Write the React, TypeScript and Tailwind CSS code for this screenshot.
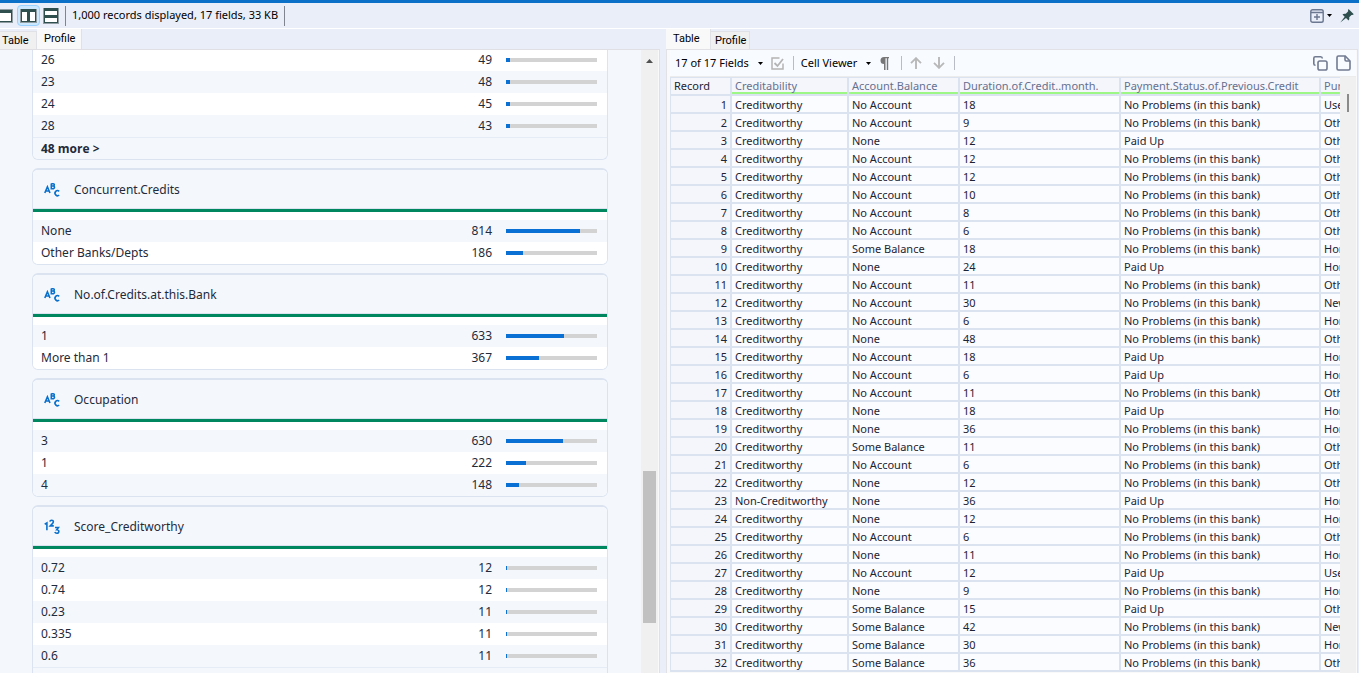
import React, { useState } from "react";

type Entry = { label: string; count: number };
type Field = { name: string; kind: "text" | "number"; entries: Entry[]; hasFooter?: boolean };

const TOTAL = 1000;

const leadEntries: Entry[] = [
  { label: "26", count: 49 },
  { label: "23", count: 48 },
  { label: "24", count: 45 },
  { label: "28", count: 43 },
];

const fields: Field[] = [
  {
    name: "Concurrent.Credits",
    kind: "text",
    entries: [
      { label: "None", count: 814 },
      { label: "Other Banks/Depts", count: 186 },
    ],
  },
  {
    name: "No.of.Credits.at.this.Bank",
    kind: "text",
    entries: [
      { label: "1", count: 633 },
      { label: "More than 1", count: 367 },
    ],
  },
  {
    name: "Occupation",
    kind: "text",
    entries: [
      { label: "3", count: 630 },
      { label: "1", count: 222 },
      { label: "4", count: 148 },
    ],
  },
  {
    name: "Score_Creditworthy",
    kind: "number",
    entries: [
      { label: "0.72", count: 12 },
      { label: "0.74", count: 12 },
      { label: "0.23", count: 11 },
      { label: "0.335", count: 11 },
      { label: "0.6", count: 11 },
    ],
    hasFooter: true,
  },
];

const NP = "No Problems (in this bank)";
const PU = "Paid Up";
const CW = "Creditworthy";
const NA = "No Account";
const SB = "Some Balance";
const HR = "Home Related";

const records: [string, string, number, string, string][] = [
  [CW, NA, 18, NP, "Used car"],
  [CW, NA, 9, NP, "Other"],
  [CW, "None", 12, PU, "Other"],
  [CW, NA, 12, NP, "Other"],
  [CW, NA, 12, NP, "Other"],
  [CW, NA, 10, NP, "Other"],
  [CW, NA, 8, NP, "Other"],
  [CW, NA, 6, NP, "Other"],
  [CW, SB, 18, NP, HR],
  [CW, "None", 24, PU, HR],
  [CW, NA, 11, NP, "Other"],
  [CW, NA, 30, NP, "New car"],
  [CW, NA, 6, NP, HR],
  [CW, "None", 48, NP, "Other"],
  [CW, NA, 18, PU, HR],
  [CW, NA, 6, PU, HR],
  [CW, NA, 11, NP, "Other"],
  [CW, "None", 18, PU, HR],
  [CW, "None", 36, NP, HR],
  [CW, SB, 11, NP, "Other"],
  [CW, NA, 6, NP, "Other"],
  [CW, "None", 12, NP, "Other"],
  ["Non-Creditworthy", "None", 36, PU, HR],
  [CW, "None", 12, NP, HR],
  [CW, NA, 6, NP, "Other"],
  [CW, "None", 11, NP, HR],
  [CW, NA, 12, PU, "Used car"],
  [CW, "None", 9, NP, HR],
  [CW, SB, 15, PU, "Other"],
  [CW, SB, 42, NP, "New car"],
  [CW, SB, 30, NP, HR],
  [CW, SB, 36, NP, "Other"],
];

const columns = [
  "Creditability",
  "Account.Balance",
  "Duration.of.Credit..month.",
  "Payment.Status.of.Previous.Credit",
  "Purpose",
];

function Caret() {
  return (
    <svg width="5" height="3" viewBox="0 0 5 3" aria-hidden="true">
      <path d="M0 0h5L2.500 3z" fill="#000" />
    </svg>
  );
}

function Divider() {
  return <span className="h-3.5 w-px bg-[#b9bcc4]" />;
}

function AbcIcon() {
  return (
    <svg width="16" height="16" viewBox="0 0 16 16" fill="none" stroke="#0a70cb" strokeWidth="1.6" aria-hidden="true">
      <path d="M.8 11 3.4 4.8 6 11M1.7 9h3.5" />
      <path d="M7.3 1.500v5.200h2.200a1.400 1.400 0 0 0 0-2.700H7.300M7.300 1.700h1.900a1.150 1.150 0 0 1 0 2.300" />
      <path d="M15.200 9.300a2.500 2.500 0 1 0 0 3.700" />
    </svg>
  );
}

function NumIcon() {
  return (
    <svg width="16" height="16" viewBox="0 0 16 16" fill="none" stroke="#0a70cb" strokeWidth="1.6" aria-hidden="true">
      <path d="M.7 5.300 2.900 4v7.300" />
      <path d="M5.900 2.700c.2-1.900 3.500-1.800 3.500.1 0 1.500-1.800 2.300-3.300 4.100h3.700" />
      <path d="M11 8.500h3.500L12.800 10.700c2.800-.1 2.600 3.500 0 3.500-1 0-1.700-.5-2-1.200" />
    </svg>
  );
}

function EntryRow({ entry, shaded }: { entry: Entry; shaded: boolean }) {
  return (
    <li className={`flex h-[22px] items-center pr-[10px] pl-2 ${shaded ? "bg-[#f4f8fd]" : "bg-white"}`}>
      <span className="flex-1">{entry.label}</span>
      <span className="mr-3.5">{entry.count}</span>
      <span className="h-1 w-[91px] bg-[#d3d3d3]">
        <span className="block h-full min-w-px bg-[#0a70d4]" style={{ width: `${(entry.count / TOTAL) * 100}%` }} />
      </span>
    </li>
  );
}

function FieldCard({ field }: { field: Field }) {
  return (
    <section className="overflow-hidden rounded-md border border-t-2 border-[#dae3ef] bg-white">
      <h2 className="flex h-[39px] items-center gap-3.5 border-b border-[#dae3ef] bg-[#f4f8fd] pt-px pl-[11px]">
        {field.kind === "text" ? <AbcIcon /> : <NumIcon />}
        {field.name}
      </h2>
      <ul className="border-t-3 border-[#00875f] pt-2">
        {field.entries.map((e, i) => (
          <EntryRow key={e.label} entry={e} shaded={i % 2 === 0} />
        ))}
      </ul>
      {field.hasFooter && <div className="h-[22px] border-t border-[#e6ecf5] bg-[#f4f8fd]" />}
    </section>
  );
}

function Tabs({ active, className }: { active: "Table" | "Profile"; className: string }) {
  const [current, setCurrent] = useState(active);
  return (
    <div role="tablist" className={`flex h-5 shrink-0 items-end font-['Roboto',sans-serif] text-[11px] leading-4 text-black ${className}`}>
      {(["Table", "Profile"] as const).map((t) => (
        <button
          key={t}
          role="tab"
          aria-selected={t === current}
          onClick={() => setCurrent(t)}
          className={
            t === current
              ? "h-5 w-[45px] border-r border-[#dfe1e6] bg-[#f9f9f9] pl-[7px] text-left"
              : "h-[18px] w-[39px] border-t border-r border-[#dfe1e6] bg-[#f0f0f0] pt-px pl-1 text-left"
          }
        >
          {t}
        </button>
      ))}
    </div>
  );
}

function ProfilePane() {
  return (
    <div className="flex min-h-0 min-w-0 flex-col">
      <Tabs active="Profile" className="-ml-0.5" />
      <div className="flex min-h-0 flex-1 border-t border-r border-[#e0e0e4]">
        <div className="min-w-0 flex-1 overflow-hidden bg-[#f4f8fd] pr-[33px] pl-8 text-[12px] leading-5 text-[#1f2a3a]">
          <div className="-mt-px flex flex-col gap-2">
            <section className="shrink-0 overflow-hidden rounded-b-md border border-t-0 border-[#dae3ef]">
              <ul>
                {leadEntries.map((e, i) => (
                  <EntryRow key={e.label} entry={e} shaded={i % 2 === 1} />
                ))}
              </ul>
              <button className="block h-[22px] w-full border-t border-[#e6ecf5] bg-[#f4f8fd] pl-2 text-left font-['Open_Sans',sans-serif] font-bold">
                48 more &gt;
              </button>
            </section>
            {fields.map((f) => (
              <FieldCard key={f.name} field={f} />
            ))}
          </div>
        </div>
        <div className="flex w-[17px] shrink-0 flex-col items-center bg-[#f0f0f0]">
          <svg className="mt-[9px] shrink-0" width="7" height="4" viewBox="0 0 7 4" aria-hidden="true">
            <path d="M0 4h7L3.500 0z" fill="#505050" />
          </svg>
          <div className="shrink basis-[408px]" />
          <div className="h-[152px] w-[13px] shrink-0 bg-[#c1c1c1]" />
        </div>
        <div className="w-px bg-[#f9f9f9]" />
      </div>
    </div>
  );
}

function ResultsTable() {
  return (
    <table className="w-[760px] table-fixed border-separate border-spacing-0 text-[11px] leading-[15px] text-[#1c2333]">
      <colgroup>
        <col className="w-[62px]" />
        <col className="w-[117px]" />
        <col className="w-[111px]" />
        <col className="w-[161px]" />
        <col className="w-[200px]" />
        <col />
      </colgroup>
      <thead>
        <tr className="h-[19px]">
          <th className="border-x-2 border-y border-b-2 border-l border-[#dbe2f0] bg-[#f5f6fc] p-0 pl-[3px] text-left align-top leading-4 font-normal">
            Record
          </th>
          {columns.map((c) => (
            <th
              key={c}
              className="border-t border-r-2 border-[#dbe2f0] bg-[#f5f6fc] p-0 text-left font-normal text-[#66708f]"
            >
              <div className="h-4 border-b-2 border-[#9cf786] pl-[3px] leading-4">{c}</div>
              <div className="h-0.5 bg-[#dbe2f0]" />
            </th>
          ))}
        </tr>
      </thead>
      <tbody>
        {records.map((r, i) => (
          <tr key={i} className="h-[18px]">
            <td className="border-r-2 border-b-2 border-l border-[#dbe2f0] bg-[#f5f6fc] p-0 pt-px pr-[3px] text-right">
              {i + 1}
            </td>
            {r.map((v, j) => (
              <td key={j} className="border-r-2 border-b-2 border-[#dbe2f0] bg-[#fafcff] p-0 pt-px pl-[3px] whitespace-nowrap">
                {v}
              </td>
            ))}
          </tr>
        ))}
      </tbody>
    </table>
  );
}

function TablePane() {
  return (
    <div className="flex min-h-0 min-w-0 flex-col">
      <Tabs active="Table" className="" />
      <div className="mr-px flex min-h-0 flex-1 flex-col border-x border-t border-[#e2e2e6] bg-[#f9f9f9] pr-px pl-[3px]">
        <div className="flex h-[27px] shrink-0 items-center border-b border-[#ececec] bg-[#f8fbff] pr-[5px] pl-[5px] text-[11px] text-black">
          <button className="flex items-center gap-[9px]">
            17 of 17 Fields <Caret />
          </button>
          <button aria-label="Select fields" className="mr-[9px] ml-2">
            <svg width="13" height="13" viewBox="0 0 13 13" fill="none" stroke="#b4b4b4" strokeWidth="1.500">
              <path d="M8.500 1H1v11h11V6.500" />
              <path d="m3.500 6 3 3L12 2" strokeWidth="1.800" />
            </svg>
          </button>
          <Divider />
          <button className="ml-[7px] flex items-center gap-[9px]">
            Cell Viewer <Caret />
          </button>
          <button aria-label="Show whitespace" className="mr-3 ml-[9px]">
            <svg width="9" height="13" viewBox="0 0 9 13">
              <path d="M9 0H4a3.500 3.500 0 0 0 0 7v6h1.500V1.200h1.300V13h1.400V1.200H9z" fill="#777" />
            </svg>
          </button>
          <Divider />
          <button aria-label="Previous" className="mr-[11px] ml-2">
            <svg width="12" height="12" viewBox="0 0 12 12" fill="none" stroke="#b8b8b8" strokeWidth="1.900">
              <path d="M6 12V1.500M1 6.200l5-5 5 5" />
            </svg>
          </button>
          <button aria-label="Next" className="mr-[9px]">
            <svg width="12" height="12" viewBox="0 0 12 12" fill="none" stroke="#b8b8b8" strokeWidth="1.900">
              <path d="M6 0v10.500M1 5.800l5 5 5-5" />
            </svg>
          </button>
          <Divider />
          <span className="flex-1" />
          <button aria-label="Copy" className="mr-2">
            <svg width="15" height="15" viewBox="0 0 15 15" fill="none" stroke="#717b91" strokeWidth="1.600">
              <rect x="5" y="5" width="9" height="9" rx="1.800" />
              <path d="M2.500 9.300C1.300 9.300.8 8.700.8 7.700V2.300C.8 1.300 1.300.8 2.300.8h5.400c1 0 1.600.5 1.600 1.700" />
            </svg>
          </button>
          <button aria-label="New page">
            <svg width="15" height="16" viewBox="0 0 15 16" fill="none" stroke="#717b91" strokeWidth="1.600">
              <path d="M9.200 1H2.500C1.500 1 1 1.500 1 2.500v11c0 1 .5 1.500 1.500 1.500h10c1 0 1.500-.5 1.500-1.500V6z" />
              <path d="M9 1v3.800C9 5.700 9.300 6 10.200 6H14" />
            </svg>
          </button>
        </div>
        <div className="flex min-h-0 flex-1">
          <div className="min-w-0 flex-1 overflow-hidden">
            <ResultsTable />
          </div>
          <div className="flex w-4 shrink-0 justify-center bg-[#f0f0f0] pt-[17px]">
            <div className="h-[18px] w-0.5 bg-[#8a8a8a]" />
          </div>
        </div>
      </div>
    </div>
  );
}

export default function App() {
  return (
    <main className="flex h-screen flex-col overflow-hidden border-t-3 border-[#0a70c8] bg-[#e9eef9] font-['Noto_Sans',sans-serif]">
      <header className="flex h-[25px] shrink-0 items-center">
        <button aria-label="Single pane" className="-ml-1">
          <svg width="17" height="16" viewBox="0 0 17 16">
            <path d="M0 1h17v14H0z" fill="#8f9da3" />
            <path d="M1 2h15v12H1z" fill="#2f4f4f" />
            <path d="M2 5h13v8H2z" fill="#fff" />
          </svg>
        </button>
        <button aria-label="Side by side" className="ml-1 flex h-[21px] w-[23px] items-center justify-center rounded-sm border border-[#99d1ff] bg-[#cce8ff]">
          <svg width="17" height="16" viewBox="0 0 17 16">
            <path d="M0 1h17v14H0z" fill="#8f9da3" />
            <path d="M1 1h15v13H1z" fill="#2f4f4f" />
            <path d="M2 4h5v9H2zM10 4h5v9h-5z" fill="#fff" />
          </svg>
        </button>
        <button aria-label="Stacked" className="ml-[3px]">
          <svg width="16" height="16" viewBox="0 0 16 16">
            <path d="M0 0h16v16H0z" fill="#8f9da3" />
            <path d="M1 0h14v15H1z" fill="#2f4f4f" />
            <path d="M2 3h12v4H2zM2 10h12v4H2z" fill="#fff" />
          </svg>
        </button>
        <span className="mr-1.5 ml-1.5 h-5 w-px bg-[#808490]" />
        <span className="text-[11px] text-black">1,000 records displayed, 17 fields, 33 KB</span>
        <span className="ml-1.5 h-5 w-px bg-[#808490]" />
        <span className="flex-1" />
        <button aria-label="Add" className="mr-2 flex items-center gap-[3px]">
          <svg width="14" height="14" viewBox="0 0 14 14" fill="none" stroke="#6b7690" strokeWidth="1.400">
            <rect x=".8" y=".8" width="12.400" height="12.400" rx="1.800" />
            <path d="M1 3.500h12M7 5v6M4 8h6" />
          </svg>
          <Caret />
        </button>
        <button aria-label="Pin" className="mr-[5px]">
          <svg width="14" height="14" viewBox="0 0 14 14">
            <path d="m8.500 0 5.300 5.200-1.500.8-.8-.1-2.300 2.400c.3 1.400.1 2.400-.6 3.200L6 9 .3 13.600 4.700 7.700 2.500 5.500c.8-.8 1.900-1 3.300-.7l2.400-2.500-.2-1z" fill="#2f4f4f" />
          </svg>
        </button>
      </header>
      <div className="h-px shrink-0 bg-white" />
      <div className="grid min-h-0 flex-1 grid-cols-[660fr_6fr_693fr] grid-rows-1">
        <ProfilePane />
        <div />
        <TablePane />
      </div>
    </main>
  );
}
